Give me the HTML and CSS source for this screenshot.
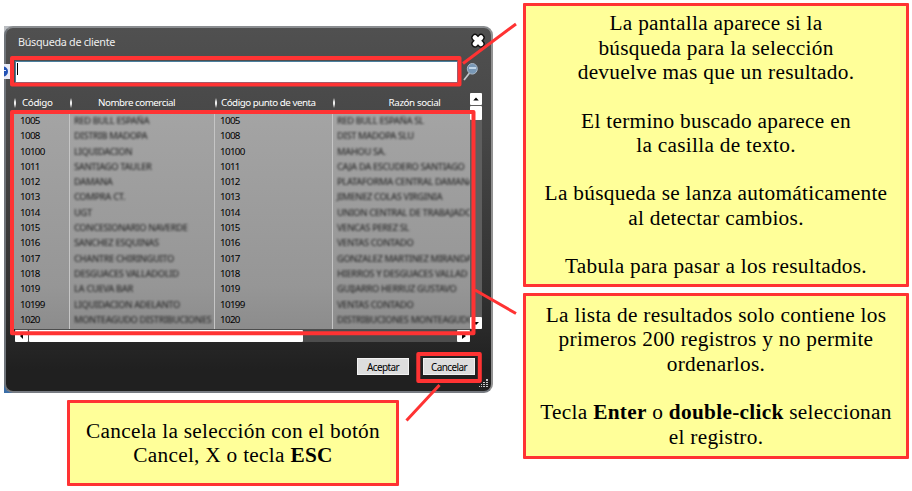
FILE: index.html
```
<!DOCTYPE html>
<html lang="es">
<head>
<meta charset="utf-8">
<title>Búsqueda de cliente</title>
<link rel="stylesheet" href="styles.css">
</head>
<body>
<main class="page">
  <section class="left">
    <div class="backdrop">
    <div class="dialog">
      <header class="titlebar">
        <h1>Búsqueda de cliente</h1>
        <svg class="close" viewBox="0 0 16 16" width="16" height="16"><path d="M5 4.600 11 10.800M11 4.600 5 10.800" stroke="#111" stroke-width="7.500" stroke-linecap="round"/><path d="M5 4.600 11 10.800M11 4.600 5 10.800" stroke="#fff" stroke-width="4.800" stroke-linecap="round"/></svg>
      </header>
      <div class="search">
        <div class="field"><i class="caret"></i></div>
        <svg class="lens" viewBox="0 0 18 20" width="18" height="20"><path d="M2 18 7.500 11" stroke="#c3c6ca" stroke-width="1.700"/><ellipse cx="10.300" cy="6.800" rx="5" ry="5.300" fill="#7897b5" stroke="#a9b8c8"/><path d="M7 6h7" stroke="#c0d5e8" stroke-width="2"/></svg>
      </div>
      <div class="list">
        <div class="table">
          <div class="head"><span>Código</span><span>Nombre comercial</span><span>Código punto de venta</span><span>Razón social</span></div>
          <div class="rows">
            <div class="row"><span>1005</span><b>RED BULL ESPAÑA</b><span>1005</span><b>RED BULL ESPAÑA SL</b></div>
            <div class="row"><span>1008</span><b>DISTRIB MADOPA</b><span>1008</span><b>DIST MADOPA SLU</b></div>
            <div class="row"><span>10100</span><b>LIQUIDACION</b><span>10100</span><b>MAHOU SA.</b></div>
            <div class="row"><span>1011</span><b>SANTIAGO TAULER</b><span>1011</span><b>CAJA DA ESCUDERO SANTIAGO</b></div>
            <div class="row"><span>1012</span><b>DAMANA</b><span>1012</span><b>PLATAFORMA CENTRAL DAMANA</b></div>
            <div class="row"><span>1013</span><b>COMPRA CT.</b><span>1013</span><b>JIMENEZ COLAS VIRGINIA</b></div>
            <div class="row"><span>1014</span><b>UGT</b><span>1014</span><b>UNION CENTRAL DE TRABAJADO</b></div>
            <div class="row"><span>1015</span><b>CONCESIONARIO NAVERDE</b><span>1015</span><b>VENCAS PEREZ SL</b></div>
            <div class="row"><span>1016</span><b>SANCHEZ ESQUINAS</b><span>1016</span><b>VENTAS CONTADO</b></div>
            <div class="row"><span>1017</span><b>CHANTRE CHIRINGUITO</b><span>1017</span><b>GONZALEZ MARTINEZ MIRANDA</b></div>
            <div class="row"><span>1018</span><b>DESGUACES VALLADOLID</b><span>1018</span><b>HIERROS Y DESGUACES VALLAD</b></div>
            <div class="row"><span>1019</span><b>LA CUEVA BAR</b><span>1019</span><b>GUIJARRO HERRUZ GUSTAVO</b></div>
            <div class="row"><span>10199</span><b>LIQUIDACION ADELANTO</b><span>10199</span><b>VENTAS CONTADO</b></div>
            <div class="row"><span>1020</span><b>MONTEAGUDO DISTRIBUCIONES</b><span>1020</span><b>DISTRIBUCIONES MONTEAGUDO</b></div>
          </div>
          <div class="hbar">
            <svg class="key" viewBox="0 0 13 12"><path d="M8 3v6L5 6z"/></svg><i class="hthumb"></i><svg class="key" viewBox="0 0 13 12"><path d="M5 3v6l4-3z"/></svg>
          </div>
        </div>
        <div class="vbar">
          <svg class="key" viewBox="0 0 12 13"><path d="M3 8h6L6 5z"/></svg><i class="vthumb"></i><svg class="key" viewBox="0 0 12 12"><path d="M3 5h6L6 8z"/></svg>
        </div>
      </div>
      <footer class="actions"><button>Aceptar</button><button>Cancelar</button></footer>
      <svg class="grip" viewBox="0 0 9 9" width="9" height="9"><path d="M7 0h2v2H7zM4 3h2v1H4zM7 3h2v1H7zM2 5h1v1H2zM4 5h2v1H4zM7 5h2v1H7zM0 7h1v1H0zM2 7h1v1H2zM4 7h2v1H4zM7 7h2v1H7z" fill="#c8c8c8"/></svg>
    </div>
    <svg class="help" viewBox="0 0 6 15" width="6" height="15"><path d="M0 0h6v15H0z" fill="#e9ebf6"/><circle cx="-1" cy="7.500" r="5" fill="#1f50b4"/><path d="M0 6.500h2" stroke="#dfe8ff"/></svg>
    </div>
    <div class="note cancel"><p>Cancela la selección con el botón<br>Cancel, X o tecla <strong>ESC</strong></p></div>
  </section>
  <section class="right">
    <div class="note intro">
      <p>La pantalla aparece si la<br>búsqueda para la selección<br>devuelve mas que un resultado.</p>
      <p>El termino buscado aparece en<br>la casilla de texto.</p>
      <p>La búsqueda se lanza automáticamente<br>al detectar cambios.</p>
      <p>Tabula para pasar a los resultados.</p>
    </div>
    <div class="note results">
      <p>La lista de resultados solo contiene los<br>primeros 200 registros y no permite<br>ordenarlos.</p>
      <p>Tecla <strong>Enter</strong> o <strong>double-click</strong> seleccionan<br>el registro.</p>
    </div>
  </section>
  <svg class="marks" viewBox="0 0 912 491" width="912" height="491" fill="none" stroke="#ff3333">
    <g stroke-width="4" stroke-linejoin="round"><rect x="12" y="58" width="447.500" height="26.500"/><rect x="12" y="112" width="461.500" height="221.300"/><rect x="418.300" y="354" width="61.500" height="27"/></g>
    <path stroke-width="3" d="M463 63.500 516 24M475 290 516 313.500M439.500 385 406.500 420.500"/>
  </svg>
</main>
</body>
</html>
```
FILE: styles.css
```
* { box-sizing: border-box; }
body { margin: 0; background: #fff; }
.page { position: relative; display: flex; width: 912px; height: 491px; overflow: hidden; }
.left { width: 523px; padding: 26px 0 0 4px; }
.right { display: flex; flex-direction: column; gap: 6px; padding-top: 3px; }
.backdrop { position: relative; width: 489px; height: 367px; background: linear-gradient(#b9bcc0, #f3f4f7 12%, #e8eaf0 25%, #8b9098 55%, #3a6ea8); background-size: 12px 100%; background-repeat: no-repeat; }
.dialog {
  position: relative; display: flex; flex-direction: column;
  width: 489px; height: 367px; padding: 4px 9px 0 8px;
  border: 2px solid #858585; border-color: #8a8d90 #929292 #777b82 #70757b; border-radius: 9px;
  background: linear-gradient(#505050, #464646 30%, #303030 75%, #202020 94%);
  font: 10px/13px "Noto Sans", sans-serif; color: #fff;
}
.help { position: absolute; left: 0; top: 38px; }
.titlebar { display: flex; justify-content: space-between; height: 29px; padding: 0 0 0 4px; }
.titlebar h1 { margin: 3px 0 0; font-size: 10.800px; font-weight: 400; line-height: 14px; letter-spacing: -0.300px; color: #eee; }
.close { margin: 1px -4px 0 0; }
.search { display: flex; height: 32px; padding-left: 1px; }
.field { width: 443px; height: 22px; border: 1px solid #4a7f9e; background: #fff; padding: 1px; }
.caret { display: block; width: 1px; height: 12px; background: #000; }
.lens { margin: 1px 0 0 4px; }
.list { display: flex; height: 249px; }
.table { width: 456px; }
.head, .row { display: grid; grid-template-columns: 56px 145px 118px 137px; }
.head { height: 20px; line-height: 20px; font-size: 9.800px; letter-spacing: -0.500px; }
.head span { position: relative; text-align: center; white-space: nowrap; }
.head span:first-child { text-align: left; padding-left: 8px; letter-spacing: -0.350px; }
.head span:nth-child(2) { padding-right: 12px; }
.head span:nth-child(3) { text-align: left; padding-left: 6px; }
.head span:nth-child(4) { padding-left: 26px; letter-spacing: -0.400px; }
.head span::before { content: ""; position: absolute; left: 0; top: 5px; width: 2px; height: 10px; background: linear-gradient(transparent, #eee 40%, #eee 60%, transparent); }
.rows { height: 216px; overflow: hidden; background: linear-gradient(90deg, transparent 55px, #c5c5c5 55px 56px, transparent 56px 200px, #c5c5c5 200px 201px, transparent 201px 318px, #c5c5c5 318px 319px, transparent 319px), linear-gradient(#a4a4a4, #969696 80%, #8c8c8c); color: #000; }
.row { height: 15.300px; line-height: 15.300px; font-size: 9.800px; letter-spacing: -0.650px; }
.row span { padding-left: 6px; }
.row span:nth-child(3) { padding-left: 5px; }
.row b { padding-left: 4px; overflow: hidden; white-space: nowrap; font-size: 9.300px; letter-spacing: -0.350px; font-weight: 500; color: #303030; filter: blur(1.200px); }
.hbar { display: flex; height: 13px; margin-left: 1px; padding-top: 1px; background: #4d4d4d; }
.key { flex: none; width: 13px; height: 12px; background: #fff; border-radius: 1px; }
.hthumb { width: 274px; margin: 0 auto 0 1px; background: #fff; border-radius: 1px; }
.vbar { display: flex; flex-direction: column; width: 12px; height: 236px; background: #5e5e5e; }
.vbar .key { width: 12px; }
.vthumb { height: 14px; margin: 1px 0 auto; background: #fff; border-radius: 1px; }
.actions { display: flex; justify-content: flex-end; gap: 14px; padding: 16px 7px 0 0; }
.actions button { width: 52px; height: 17px; padding: 0; border: 1px solid #f2f2f2; background: #ddd; color: #000; font: 10px/14px "Noto Sans", sans-serif; letter-spacing: -0.600px; }
.grip { position: absolute; right: 3px; bottom: 3px; }
.note { display: flex; flex-direction: column; justify-content: center; gap: 24.300px; width: 386px; border: 3px solid #ff3333; border-radius: 1px; background: #ffff99; color: #000; text-align: center; font: 21.300px/24.300px "Liberation Serif", serif; letter-spacing: 0.290px; white-space: nowrap; }
.note p { margin: 0; }
.intro { height: 284px; }
.results { height: 166px; }
.cancel { width: 332px; height: 86px; margin: 7px 0 0 63px; }
.marks { position: absolute; inset: 0; pointer-events: none; }
```
